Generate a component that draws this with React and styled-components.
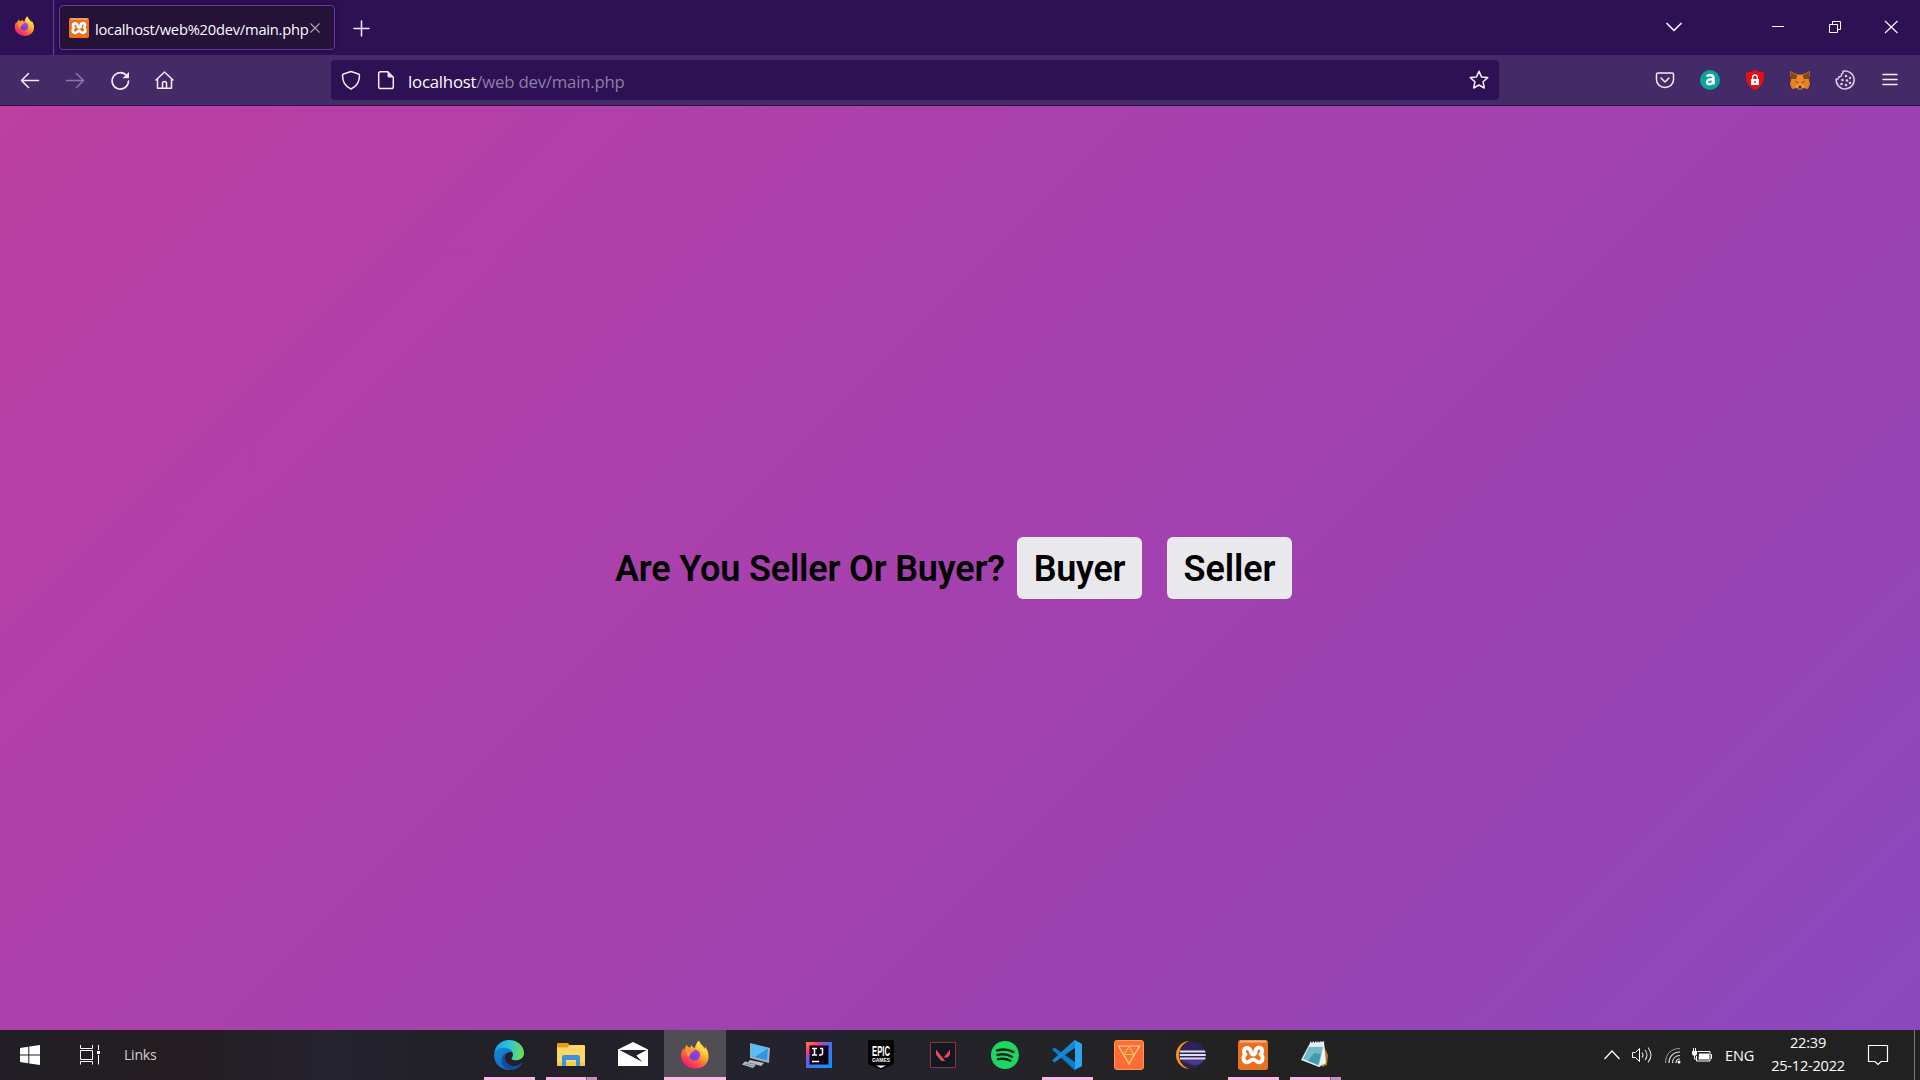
import React from "react";
import styled, { createGlobalStyle } from "styled-components";

const GlobalStyle = createGlobalStyle`
  * { box-sizing: border-box; }
  html, body { margin: 0; padding: 0; overflow: hidden; background: #2e1055; }
`;
const ui = `"Open Sans", "Noto Sans", sans-serif`;

const Screen = styled.div`
  width: 1920px; height: 1080px; display: flex; flex-direction: column;
  font-family: ${ui}; color: #fbfbfe;
`;
const TabBar = styled.div`
  height: 55px; display: flex; background: #2e1055; flex: none;
`;
const FirefoxView = styled.div`
  width: 54px; height: 55px; border-right: 1px solid #624583;
  display: flex; padding: 16px 0 0 14px;
`;
const Tab = styled.div`
  margin: 5px 0 0 5px; width: 276px; height: 45px; border: 1px solid #6a36a8;
  border-radius: 4px; background: #251238; box-shadow: 0 0 4px rgba(0,0,0,.45);
  display: flex; align-items: center; padding-left: 9px;
`;
const TabTitle = styled.span`
  width: 214px; margin-left: 6px; font-size: 14.7px; letter-spacing: ${p => p.$ls}px;
  line-height: 20px; white-space: nowrap; padding-top: 2px;
`;
const NewTab = styled.div`
  margin: 20px 0 0 18px; height: 16px; display: flex;
`;
const WindowButtons = styled.div`
  margin-left: auto; display: flex; padding-top: 17px; height: 40px;
`;
const WinButton = styled.div`
  width: 20px; height: 20px; margin-right: ${p => p.$gap}px; display: flex;
`;
const Toolbar = styled.div`
  height: 51px; flex: none; background: #452a68; border-bottom: 1px solid #2a0f4c;
  display: flex; align-items: flex-start; padding: 5px 20px 0 20px;
`;
const ToolGroup = styled.div`
  display: flex; gap: ${p => p.$gap}px; padding-top: 10px; width: ${p => p.$w || "auto"};
  margin-left: ${p => p.$push ? "auto" : "0"};
`;
const UrlBar = styled.div`
  width: 1168px; height: 40px; border-radius: 4px; background: #2e1055;
  display: flex; align-items: center; padding: 0 10px;
`;
const Url = styled.div`
  margin-left: 12px; font-size: 16.8px; line-height: 24px; color: #8f7fa8; flex: 1;
  letter-spacing: ${p => p.$ls}px; padding-top: 3px; white-space: nowrap;
  b { font-weight: 400; color: #fbfbfe; }
`;
const Page = styled.main`
  flex: 1; display: flex; align-items: flex-start; padding: 431px 0 0 615px;
  background: linear-gradient(135deg, #bc3fa2 0%, #ac40ab 32%, #a541ae 50%, #9c42b2 68%, #9545b7 83%, #8b49be 100%);
  font-family: Roboto, sans-serif; font-weight: 600; font-size: 36px; color: #000;
`;
const Question = styled.h1`
  margin: 0; width: 402px; font: inherit; line-height: 62px; white-space: nowrap;
  letter-spacing: ${p => p.$ls}px; padding-top: 1px;
`;
const Choice = styled.button`
  width: 125px; height: 62px; margin-right: 25px; padding: 2px 0 0; border: 0; border-radius: 6px;
  background: #e9e9ed; font: inherit; color: #000; letter-spacing: ${p => p.$ls}px;
`;
const Taskbar = styled.footer`
  height: 50px; flex: none; display: flex; overflow: hidden;
  background: linear-gradient(90deg, #211f25 0, #241d22 180px, #241f26 240px, #25232f 330px, #222027 430px, #222029 560px, #24222c 800px, #24232b 960px, #232326 1100px, #222 1250px, #212121 1920px);
`;
const StartArea = styled.div`
  width: 478px; display: flex; align-items: center;
  svg { margin-left: 20px; }
  svg + svg { margin-left: 40px; }
`;
const LinksLabel = styled.span`
  margin-left: 24px; font-size: 14.2px; color: #d0ced3; letter-spacing: -0.3px; padding-bottom: 1px;
`;
const AppSlot = styled.div`
  width: 62px; height: 50px; display: flex; flex-direction: column; align-items: center;
  background: ${p => p.$active ? "#504e54" : "transparent"};
`;
const AppIcon = styled.div`
  height: 47px; padding-top: 10px; width: 30px; display: flex;
`;
const Underline = styled.div`
  height: 3px; width: ${p => p.$full ? 62 : 51}px;
  background: ${p => p.$multi ? "linear-gradient(90deg,#fcb6e8 40px,#8a6580 40px,#8a6580 41px,#c98fbb 41px)" : "#fcb6e8"};
`;
const Tray = styled.div`
  margin-left: auto; display: flex; align-items: center;
`;
const TrayItem = styled.div`
  width: ${p => p.$w}px; display: flex; font-size: 14.6px; white-space: nowrap;
  letter-spacing: ${p => p.$ls || 0}px;
`;
const Clock = styled.div`
  width: 82px; text-align: center; font-size: 14.6px; line-height: 23px; height: 48px;
  letter-spacing: ${p => p.$ls}px; white-space: nowrap; margin-right: 19px;
`;
const ShowDesktop = styled.div`
  width: 6px; height: 50px; border-left: 1px solid #777;
`;
const Svg = ({ w = 20, h = w, vb, children, ...r }) => (
  <svg width={w} height={h} viewBox={vb || `0 0 ${w} ${h}`} fill="none" overflow="visible" flex="none" {...r}>{children}</svg>
);
const DocIcon = styled(Svg)`margin-left: 15px; flex: none;`;
const line = { stroke: "#f3eff8", strokeWidth: 1.5, strokeLinecap: "round", strokeLinejoin: "round" };

const Firefox = ({ w, id }) => (
  <Svg w={w} vb="0 0 30 30">
    <defs>
      <linearGradient id={id + "a"} x1="24" y1="3" x2="7" y2="28" gradientUnits="userSpaceOnUse">
        <stop stopColor="#fff44f" /><stop offset=".35" stopColor="#ffb52e" /><stop offset=".6" stopColor="#ff6b36" /><stop offset=".85" stopColor="#fb2d62" /><stop offset="1" stopColor="#e31587" />
      </linearGradient>
      <linearGradient id={id + "b"} x1="18" y1="9" x2="13" y2="22" gradientUnits="userSpaceOnUse">
        <stop stopColor="#b43bea" /><stop offset="1" stopColor="#5b45d8" />
      </linearGradient>
    </defs>
    <path fill={`url(#${id}a)`} d="M19 .5c1.2 4 4.600 5 5.600 8.500l.6-2.300c2.500 3.300 3.900 7.300 3.300 11.300C27.500 25 22 28.500 15.500 28.500 7.500 28.500 1 23 1 15.500c0-3 1-5.300 2.300-7L4 10l2.500-5L8.700 7.500l2.300-.2L10.800 5l4 3.400C15.500 5 16.800 2.500 19 .5z" />
    <circle cx="14.500" cy="15" r="5.600" fill={`url(#${id}b)`} />
    <path fill="#ff9830" d="M7 7.800c2-.7 4 0 5.500 1.500l2.500.3c-.7 2-3 2.200-4 3.200-.5 2-1.500 2.800-2.700 4C6 13.800 5.500 10.300 7 7.800z" />
    <path fill="#ffdc45" d="M19 1.500c.5 4 5.500 6 6 14-1-3-2.500-5-5.500-7.500-2-1-2.500-4-.5-6.500z" />
  </Svg>
);
const Xampp = ({ w }) => (
  <Svg w={w} vb="0 0 30 30">
    <rect width="30" height="30" rx="2.500" fill="#e8701f" />
    <path d="M2 1.500h26" stroke="#f5b487" strokeWidth="2" />
    <path d="M9.200 8C5.600 8 4.800 12.600 7.500 14.400 4.200 16.500 5 22.300 9.200 22.300c3 0 3.300-3 5.800-3s2.800 3 5.800 3c4.200 0 5-5.800 1.700-7.900C25.400 11.500 24.500 7.700 21 7.700c-3 0-3.400 1.600-3.700 4" stroke="#fff" strokeWidth="3.800" strokeLinecap="round" strokeLinejoin="round" />
    <path d="M9.200 8c3.800 0 3 4 4.800 6 1.500 1.200 4 .2 3.600-3" stroke="#fff" strokeWidth="3.800" strokeLinecap="round" />
  </Svg>
);
const Edge = () => (
  <Svg w={30}>
    <defs>
      <linearGradient id="ea" x1="3" y1="9" x2="29" y2="13" gradientUnits="userSpaceOnUse"><stop stopColor="#1fa5e0" /><stop offset=".45" stopColor="#2fc5d8" /><stop offset="1" stopColor="#6be04b" /></linearGradient>
      <linearGradient id="eb" x1="3" y1="10" x2="12" y2="28" gradientUnits="userSpaceOnUse"><stop stopColor="#1488d8" /><stop offset="1" stopColor="#1565bd" /></linearGradient>
    </defs>
    <path fill="url(#ea)" d="M.3 13C1.500 5 7.500 0 15 0c8.500 0 15 6 15 13 0 5-4 7.300-8 7.300-3.500 0-5-1.300-4.300-2.500.8-1 1.500-2 1.200-4C18.500 10.500 15 8.500 11 8.500 5.500 8.500 1.500 11 .3 13z" />
    <path fill="url(#eb)" d="M0 15c0-4 4-7.300 9.500-7.300 4.500 0 8 2 9 5-3-1.500-6.500 0-7.500 3-2 7 4 14 8 13.500-1.500.6-3 .8-4 .8C6.500 30 0 23.500 0 15z" />
    <path fill="#164a9b" d="M12.500 13c-4 5 0 12 6 13 4 .6 7-1.500 8.500-3 .5-.5 1.200 0 .8.700C26 27 22 30 16.500 30 9 29 5.500 20 9 15.500c1-1.300 2.500-2.200 3.500-2.500z" />
  </Svg>
);
const Folder = () => (
  <Svg w={30}>
    <path fill="#e0a00f" d="M1 4a1 1 0 0 1 1-1h10l2 2.500h14V12H1z" />
    <path fill="#ffd766" d="M1 7.500h10L14 5h14a1 1 0 0 1 1 1v19a1 1 0 0 1-1 1H2a1 1 0 0 1-1-1z" />
    <path fill="#f7c948" d="M1 22h28v3a1 1 0 0 1-1 1H2a1 1 0 0 1-1-1z" />
    <path fill="#3a94db" d="M6 26V17a2 2 0 0 1 2-2h14a2 2 0 0 1 2 2v9h-4v-6h-10v6z" />
  </Svg>
);
const Mail = () => (
  <Svg w={30}>
    <path fill="#fff" d="M0 9.500 15 2l15 7.500V26H0z" />
    <path fill="#24222a" d="M1.500 10h27L18.500 15.500 24.500 22z" />
    <path fill="#fff" d="m18.500 15.500 6 6.500-3-7.500z" />
  </Svg>
);
const Computer = () => (
  <Svg w={30}>
    <path fill="#9eb2be" d="m8 3 20 5-1 15-4-1-15-4z" />
    <path fill="#2c95df" d="m9 4 17 4.500-1 12L9 16z" />
    <path fill="#5bbdf5" d="m9 4 17 4.500L13 17l-4-1z" />
    <path fill="#b6bec4" d="m8 20 14 3-3 3-5-1.500L11 28 0 24.500l3-3 3 .5z" />
    <path stroke="#7f8991" d="m3 24 10 2.500M5 22.500l9 2" />
  </Svg>
);
const IntelliJ = () => (
  <Svg w={30}>
    <defs><linearGradient id="ij" x1="2" y1="3" x2="22" y2="26" gradientUnits="userSpaceOnUse"><stop stopColor="#ff7a3c" /><stop offset=".25" stopColor="#f0407c" /><stop offset=".5" stopColor="#5368e8" /><stop offset="1" stopColor="#1b8cff" /></linearGradient></defs>
    <path fill="url(#ij)" d="M2 2h26v26H2z" /><path fill="#100314" d="M5.500 5.500h19v19h-19z" />
    <path d="M8 8.500h5m-2.500 0V15M8 15h5m3-6.500h2.500V13q0 2-2 2H15M8 21.500h7" stroke="#fff" strokeWidth="1.500" />
  </Svg>
);
const EpicText = styled.text`font-family: "Liberation Sans", sans-serif; font-weight: 700;`;
const Epic = () => (
  <Svg w={30}>
    <path fill="#050505" d="M2 2q0-2 2-2h22q2 0 2 2v22l-13 6-13-6z" />
    <EpicText x="6" y="15.500" fontSize="15" textLength="18" lengthAdjust="spacingAndGlyphs" fill="#fff">EPIC</EpicText>
    <EpicText x="6" y="22" fontSize="5.500" textLength="18" lengthAdjust="spacingAndGlyphs" fill="#fff">GAMES</EpicText>
    <path fill="#fff" d="M10 25.500h10L15 28z" />
  </Svg>
);
const Valorant = () => (
  <Svg w={30}>
    <path fill="#0f1923" stroke="#92303b" d="M2.500 2.500h25v25h-25z" />
    <path fill="#f0475a" d="M8 9.500v5.200L13.300 21h3.900zM22 9.500v5.200L19.500 17.500H15.700z" />
  </Svg>
);
const Spotify = () => (
  <Svg w={30}>
    <circle cx="15" cy="15" r="14" fill="#1ed760" />
    <path d="M7 10.500c5-1.500 12-1 16.500 1.600M7.500 15c5-1.300 10-.7 14.500 1.700M8 19.200c4.500-1 8.500-.5 12.500 1.600" stroke="#16251d" strokeWidth="2.400" strokeLinecap="round" />
  </Svg>
);
const VsCode = () => (
  <Svg w={30}>
    <path fill="#0a7cc9" d="M0 9.500 2.500 7.500 24 23v7l-2-.5z" />
    <path fill="#1688cf" d="M0 20.500 2.500 22.500 24 7V0l-2 .5z" />
    <path fill="#29a5f2" d="m22 0 7 3.200q1 .5 1 1.800v20q0 1.300-1 1.800L22 30q1-.5 1-2V2q0-1.500-1-2z" />
  </Svg>
);
const Hoppscotch = () => (
  <Svg w={30}>
    <rect x=".5" y=".5" width="29" height="29" rx="2.500" fill="#ff6c37" stroke="#ff9a4c" />
    <path d="M4.500 6h21L15 24z" stroke="#ffd6a0" strokeWidth="1.200" />
    <path d="m15 6.500-5 8h10zM10 14.500l5 9 5-9" stroke="#ffc552" strokeWidth="1.100" />
  </Svg>
);
const Eclipse = () => (
  <Svg w={30}>
    <circle cx="14" cy="15" r="14" fill="#f7941e" />
    <circle cx="17.400" cy="15" r="14.500" fill="#232325" />
    <circle cx="16.500" cy="15" r="13" fill="#2f2259" /><path fill="#47398a" d="M4.500 19.500h24A13 13 0 0 1 16 25z" />
    <path fill="#dfdeeb" d="M3.700 10.500h25.300l.5 2H3.700zm0 3.500h26v2h-26zm0 3.400h26l-.7 2H4z" />
  </Svg>
);
const Notepad = () => (
  <Svg w={30}>
    <path fill="#b17a26" d="m23 4 5 11-1 10-5 2z" />
    <path fill="#f0f3f4" d="m10 3 14-1 2 21-7 4z" />
    <path fill="#d9eef2" d="M10 3 1 20l18 7L24 5z" />
    <path fill="#73b9c6" d="m9 7-6 12 16 6 4-18z" />
    <path fill="#419aae" d="m14 13 7 1-3 11-10-4z" />
    <path stroke="#e4e9ea" strokeWidth="1.500" strokeDasharray="1.500 1" d="m10 2.500 15-.5" />
  </Svg>
);

const apps = [
  { icon: <Edge />, open: true },
  { icon: <Folder />, open: true, multi: true },
  { icon: <Mail /> },
  { icon: <Firefox w={30} id="task" />, open: true, active: true },
  { icon: <Computer /> },
  { icon: <IntelliJ /> },
  { icon: <Epic /> },
  { icon: <Valorant /> },
  { icon: <Spotify /> },
  { icon: <VsCode />, open: true },
  { icon: <Hoppscotch /> },
  { icon: <Eclipse /> },
  { icon: <Xampp w={30} />, open: true },
  { icon: <Notepad />, open: true, multi: true },
];

export default function App() {
  return (
    <Screen>
      <GlobalStyle />
      <TabBar>
        <FirefoxView><Firefox w={21} id="view" /></FirefoxView>
        <Tab>
          <Xampp w={20} />
          <TabTitle $ls={-0.22}>localhost/web%20dev/main.php</TabTitle>
          <Svg w={12}><path d="m1.500 1.500 9 9m0-9-9 9" stroke="#aaa0b5" strokeWidth="1.200" /></Svg>
        </Tab>
        <NewTab><Svg w={17}><path d="M8.500 1v15M1 8.500h15" {...line} /></Svg></NewTab>
        <WindowButtons>
          <WinButton $gap={84}><Svg><path d="m3 6.500 7 7 7-7" {...line} strokeWidth="1.700" /></Svg></WinButton>
          <WinButton $gap={37}><Svg><path d="M4 9.500h12" stroke="#fff" /></Svg></WinButton>
          <WinButton $gap={36}><Svg><path d="M4.500 7.500h8v8h-8zM7.500 7V4.500h8v8H13" stroke="#fff" /></Svg></WinButton>
          <WinButton $gap={19}><Svg><path d="m4 4 12.500 12m0-12L4 16" stroke="#fff" strokeWidth="1.100" /></Svg></WinButton>
        </WindowButtons>
      </TabBar>
      <Toolbar>
        <ToolGroup $gap={25} $w="311px">
          <Svg><path d="M18.500 10.500H1.500m7-7-7 7 7 7" {...line} /></Svg>
          <Svg opacity=".4"><path d="M1.500 10.500h17m-7-7 7 7-7 7" {...line} /></Svg>
          <Svg><path d="M16.500 5.500A8.200 8.200 0 1 0 18.500 11" {...line} strokeWidth="1.600" /><path fill="#f3eff8" d="M19 2v5.500q0 .8-.8.800H12.500z" /></Svg>
          <Svg><path d="M1 10 9.500 2l8.500 8M2.500 9v9.300h14V9M7.500 18v-4.500q0-2 2-2t2 2V18" {...line} /></Svg>
        </ToolGroup>
        <UrlBar>
          <Svg><path d="M10 1.500 17.500 4q1 .3 1 1.300C18.500 12 16 16.500 10 19 4 16.500 1.500 12 1.500 5.300q0-1 1-1.300z" {...line} /></Svg>
          <DocSlot>
            <Svg><path d="M4.500 1.700h7.300l5.500 5.500v9.500q0 1.800-1.800 1.800h-11q-1.800 0-1.800-1.800V3.500q0-1.800 1.800-1.800z" {...line} /><path fill="#e7e0ee" d="M11.500 1.500 17.500 7.500h-4.500q-1.500 0-1.500-1.500z" /></Svg>
          </DocSlot>
          <Url $ls={-0.22}><b>localhost</b>/web dev/main.php</Url>
          <Svg><path d="m10 1.300 2.500 5.600 6.200.7-4.600 4.200 1.200 6.200L10 15l-5.300 3 1.200-6.200L1.300 7.600l6.200-.7z" {...line} /></Svg>
        </UrlBar>
        <ToolGroup $gap={25} $push>
          <Svg><path d="M3 3h14q1.500 0 1.500 1.500v5.200a8.500 7.800 0 0 1-17 0V4.500Q1.500 3 3 3zm3 5 4 4 4-4" {...line} /></Svg>
          <Svg><circle cx="10" cy="10" r="10" fill="#08a597" /><path d="M6.800 6.500q1.200-1.500 3.300-1.500 3.400 0 3.400 3v6.500M13 9.300Q7 9 7 12.200c0 3 5 2.700 6-.7" stroke="#fff" strokeWidth="2.500" /></Svg>
          <Svg><path fill="#ea0d12" d="M10 0q4 2.500 9 2.500C19.500 12 16.500 17 10 20 3.500 17 .5 12 1 2.500 6 2.500 10 0 10 0z" /><path fill="#fff" d="M6 9h8v6H6z" /><path d="M7.700 9V7.300a2.300 2.300 0 0 1 4.600 0V9" stroke="#fff" strokeWidth="1.300" /><path d="M10 11v2" stroke="#ea0d12" strokeWidth="1.400" /></Svg>
          <Svg><path fill="#e8821e" d="m0 1 7.500 3.500h5L20 1l-1 9 1 4-2 5-5-1-1.500 1.500h-3L7 18l-5 1-2-5 1-4z" /><path fill="#84481e" d="m.5 1.500 7 4L6 9H1zM19.500 1.500l-7 4L14 9h5z" /><path fill="#f08a26" d="M7.500 5h5l1.500 7-4 4-4-4z" /><path fill="#3c2a2a" d="m5 11 3 1-.5 1.300zM15 11l-3 1 .5 1.300zM8.300 16h3.400l-.5 2.500H8.800z" /><path fill="#d5c4b6" d="m6 15.500 2.300.5v2.500zM14 15.500l-2.300.5v2.500z" /></Svg>
          <Svg><path d="M8 1.200A9 9 0 1 1 1.200 9c1.500.5 2.800-.5 2.600-2.200C6 7 7 5.500 6.500 4 8 3.500 8.500 2.500 8 1.200z" stroke="#d8cfe0" strokeWidth="1.500" strokeLinejoin="round" /><g fill="#d8cfe0"><circle cx="11" cy="6" r="1.300" /><circle cx="7.500" cy="10" r="1.300" /><circle cx="12" cy="10.500" r="1.300" /><circle cx="6.500" cy="14" r="1.300" /><circle cx="11" cy="15" r="1.300" /><circle cx="15" cy="13" r="1.300" /><circle cx="15" cy="8" r="1.200" /></g></Svg>
          <Svg><path d="M3 4.500h14M3 9.500h14M3 14.500h14" {...line} /></Svg>
        </ToolGroup>
      </Toolbar>
      <Page>
        <Question $ls={-0.18}>Are You Seller Or Buyer?</Question>
        <Choice $ls={-0.3}>Buyer</Choice>
        <Choice $ls={-0.1}>Seller</Choice>
      </Page>
      <Taskbar>
        <StartArea>
          <Svg><path fill="#fff" d="M0 3 8.300 1.700V9.500H0zM9.300 1.500 20 0v9.500H9.300zM0 10.500h8.300v7.800L0 17zM9.300 10.500H20V20L9.300 18.500z" /></Svg>
          <Svg><path d="M.5 0v3.500h12V0M.5 5.500h12v9H.5zM.5 19.500v-3h12v3M18.500 0v5M18.500 10v9.500" stroke="#fff" /><path fill="#fff" d="M17 6h3v3h-3z" /></Svg>
          <LinksLabel>Links</LinksLabel>
        </StartArea>
        {apps.map((a, i) => (
          <AppSlot key={i} $active={a.active}>
            <AppIcon>{a.icon}</AppIcon>
            {a.open && <Underline $full={a.active} $multi={a.multi} />}
          </AppSlot>
        ))}
        <Tray>
          <TrayItem $w={27}><Svg w={16}><path d="m.5 12 7.500-8 7.500 8" stroke="#fff" strokeWidth="1.200" /></Svg></TrayItem>
          <TrayItem $w={33}><Svg w={22}><path d="M1.500 8.500h3L8.500 4.500v13l-4-4h-3z" stroke="#fff" /><path d="M11 8.500q2 2.500 0 5M14 6q4 5 0 10M17 3.500q6 7.500 0 15" stroke="#ddd" strokeWidth="1.100" /></Svg></TrayItem>
          <TrayItem $w={28}><Svg w={17}><path d="M1.500 16C1.500 7 7 1.500 16 1.500" stroke="#999" /><path d="M5 16C5 9.500 9.500 5 16 5M8.500 16c0-4.500 3-7.500 7.500-7.500M12 16q0-4 4-4" stroke="#ddd" strokeWidth="1.200" /><circle cx="15" cy="15" r="1.500" fill="#fff" /></Svg></TrayItem>
          <TrayItem $w={33}><Svg w={20} h={16}><path d="M5.500 4.500H18V14H4.500V9M18.500 7.500h1v4h-1" stroke="#fff" /><path fill="#fff" d="M7 6.500h10v6H6.500zM0 4h5v3q0 1.500-2.500 2Q0 8.500 0 7z" /><path d="M1.500 1v3m2-3v3M2.500 9v3H4" stroke="#fff" /></Svg></TrayItem>
          <TrayItem $w={42} $ls={-0.2}>ENG</TrayItem>
          <Clock $ls={-0.25}><div>22:39</div><div>25-12-2022</div></Clock>
          <TrayItem $w={46}><Svg w={21} h={22}><path d="M.5 1.500h19v16H13l-3 3-3-3H.5z" stroke="#fff" strokeWidth="1.200" /></Svg></TrayItem>
          <ShowDesktop />
        </Tray>
      </Taskbar>
    </Screen>
  );
}

const DocSlot = styled.div`
  display: flex; margin-left: 15px;
`;
